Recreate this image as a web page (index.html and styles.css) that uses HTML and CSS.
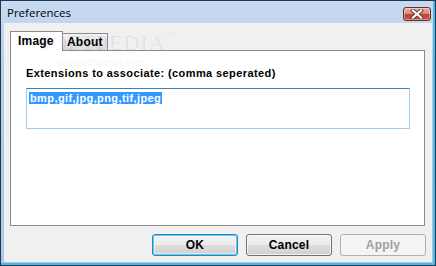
FILE: index.html
```html
<!DOCTYPE html>
<html>
<head>
<meta charset="utf-8">
<link rel="stylesheet" href="styles.css">
</head>
<body>
<div class="window">
  <div class="titlebar">
    <span class="title">Preferences</span>
    <div class="close">
      <svg width="14" height="10" viewBox="0 0 14 10">
        <path d="M3 1.5 L11 8.5 M11 1.5 L3 8.5" stroke="#5a3a36" stroke-width="4" stroke-linecap="square" fill="none"/>
        <path d="M3 1.5 L11 8.5 M11 1.5 L3 8.5" stroke="#ffffff" stroke-width="2.2" stroke-linecap="square" fill="none"/>
      </svg>
    </div>
  </div>
  <div class="client">
    <div class="tabs">
      <div class="tab tab-active">Image</div>
      <div class="tab">About</div>
    </div>
    <div class="panel">
      <div class="label">Extensions to associate: (comma seperated)</div>
      <div class="textbox"><span class="sel">bmp,gif,jpg,png,tif,jpeg</span></div>
    </div>
    <div class="buttons">
      <div class="btn btn-default">OK</div>
      <div class="btn">Cancel</div>
      <div class="btn btn-disabled">Apply</div>
    </div>
    <div class="wm">SOFTPEDIA<span class="tm">™</span></div>
    <div class="wm2">www.softpedia.com</div>
  </div>
</div>
</body>
</html>
```
FILE: styles.css
```css
html, body {
  margin: 0;
  padding: 0;
  background: #ffffff;
}
.window {
  width: 436px;
  height: 266px;
  box-sizing: border-box;
  border: 1px solid #26354a;
  background: linear-gradient(#c6daf1, #b4cdea 30%, #aac7e8);
  box-shadow: inset -2px -2px 0 #46bdee;
  display: flex;
  flex-direction: column;
  position: relative;
}
.titlebar {
  height: 22px;
  display: flex;
  align-items: center;
  justify-content: space-between;
  padding: 0 4px 0 6px;
}
.title {
  font-family: "Open Sans", "Noto Sans", sans-serif;
  font-size: 11.5px;
  color: #000;
  margin-top: 1px;
}
.close {
  width: 28px;
  height: 14px;
  box-sizing: border-box;
  border: 1px solid #6e2e28;
  border-radius: 3px;
  background: linear-gradient(#e8b2a8 0%, #d98d80 45%, #c2402f 55%, #c95a44 100%);
  display: flex;
  align-items: center;
  justify-content: center;
  margin-top: 3px;
  box-shadow: inset 0 0 0 1px rgba(255,255,255,0.35);
}
.close svg { display: block; }
.client {
  margin: 0 3px 3px 3px;
  height: 239px;
  background: #f0f0f0;
  display: flex;
  flex-direction: column;
  position: relative;
  font-family: "Liberation Sans", Arial, sans-serif;
  font-size: 11px;
  font-weight: bold;
  letter-spacing: 0.4px;
}
.tabs {
  display: flex;
  align-items: flex-end;
  margin: 8px 0 0 6px;
  height: 19px;
}
.tab {
  box-sizing: border-box;
  height: 17px;
  width: 46px;
  margin-left: -1px;
  border: 1px solid #898c95;
  border-bottom: none;
  background: linear-gradient(#f3f3f3, #e6e6e6 50%, #dadada);
  padding: 2px 0 0 4px;
  line-height: 13px;
  font-size: 12px;
  letter-spacing: 0.2px;
  color: #000;
}
.tab-active {
  width: 53px;
  height: 20px;
  margin-left: 0;
  margin-bottom: -1px;
  background: #ffffff;
  position: relative;
  z-index: 1;
  padding: 3px 0 0 7px;
}
.tab-active + .tab {
  margin-left: -1px;
}
.panel {
  box-sizing: border-box;
  width: 415px;
  height: 176px;
  margin-left: 6px;
  border: 1px solid #898c95;
  background: #ffffff;
  padding: 16px 0 0 15px;
}
.label {
  line-height: 13px;
  color: #000;
}
.textbox {
  box-sizing: border-box;
  width: 384px;
  height: 41px;
  margin-top: 8px;
  border: 1px solid #a6cbe6;
  border-top-color: #3c7fb1;
  padding: 3px 0 0 2px;
  line-height: 12px;
}
.sel {
  background: #3399ff;
  color: #ffffff;
  padding: 0 1px;
}
.buttons {
  display: flex;
  justify-content: flex-end;
  gap: 8px;
  margin: 8px 6px 0 0;
}
.btn {
  box-sizing: border-box;
  width: 86px;
  height: 22px;
  border: 1px solid #707070;
  border-radius: 3px;
  background: linear-gradient(#f2f2f2 0%, #ebebeb 50%, #dddddd 51%, #cfcfcf 100%);
  box-shadow: inset 0 0 0 1px rgba(255,255,255,0.7);
  display: flex;
  align-items: center;
  justify-content: center;
  color: #000;
  font-size: 12px;
  letter-spacing: 0.2px;
}
.btn-default {
  border-color: #3c7fb1;
  box-shadow: inset 0 0 0 1px #48d1ff, inset 0 0 0 2px rgba(255,255,255,0.5);
}
.btn-disabled {
  border-color: #adb2b5;
  background: #f4f4f4;
  box-shadow: none;
  color: #a0a0a0;
}
.wm {
  position: absolute;
  left: 34px;
  top: 7px;
  font-family: "Liberation Serif", serif;
  font-size: 22px;
  font-weight: normal;
  letter-spacing: 1px;
  color: rgba(0,0,0,0.07);
  pointer-events: none;
  z-index: 3;
}
.tm {
  font-size: 9px;
  vertical-align: top;
}
.wm2 {
  position: absolute;
  left: 54px;
  top: 34px;
  font-family: "Liberation Sans", sans-serif;
  font-size: 10px;
  font-weight: normal;
  letter-spacing: 0;
  color: rgba(0,0,0,0.07);
  z-index: 3;
}
```
